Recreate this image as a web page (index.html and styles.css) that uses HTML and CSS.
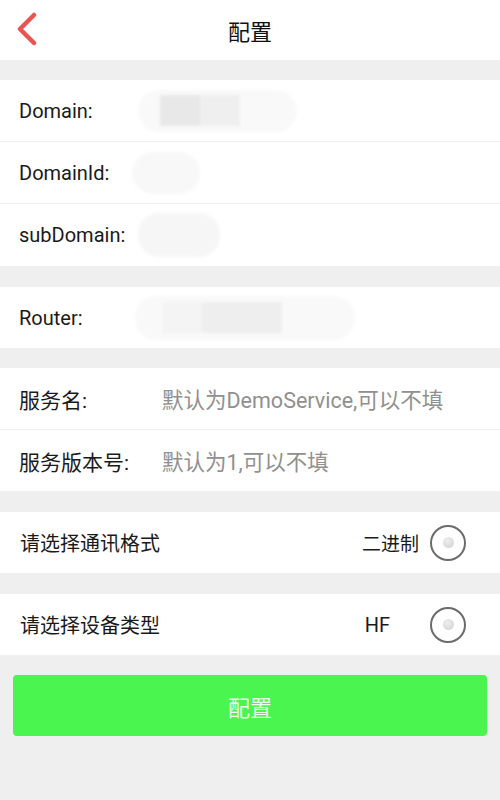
FILE: index.html
```html
<!DOCTYPE html>
<html lang="zh">
<head>
<meta charset="utf-8">
<link rel="stylesheet" href="styles.css">
</head>
<body>
<div class="app">
  <header class="topbar">
    <svg class="back" width="24" height="34" viewBox="0 0 24 34"><path d="M19 3 L5 17 L19 31" fill="none" stroke="#ec5454" stroke-width="4.5" stroke-linecap="round" stroke-linejoin="round"/></svg>
    <h1 class="title">配置</h1>
  </header>

  <section class="group g-domain">
    <div class="row">
      <span class="label">Domain:</span>
      <div class="blob blob-domain"><i class="b1"></i><i class="b2"></i></div>
    </div>
    <div class="row">
      <span class="label">DomainId:</span>
      <div class="blob blob-id"></div>
    </div>
    <div class="row">
      <span class="label">subDomain:</span>
      <div class="blob blob-sub"></div>
    </div>
  </section>

  <section class="group g-wide">
    <div class="row">
      <span class="label">Router:</span>
      <div class="blob blob-router"><i class="b1"></i><i class="b2"></i></div>
    </div>
  </section>

  <section class="group g-service">
    <div class="row">
      <span class="label cjk">服务名:</span>
      <span class="placeholder">默认为DemoService,可以不填</span>
    </div>
    <div class="row">
      <span class="label cjk">服务版本号:</span>
      <span class="placeholder">默认为1,可以不填</span>
    </div>
  </section>

  <section class="group g-wide">
    <div class="row choice">
      <span class="label">请选择通讯格式</span>
      <span class="value">二进制</span>
      <span class="radio"><span class="dot"></span></span>
    </div>
  </section>

  <section class="group g-wide">
    <div class="row choice">
      <span class="label">请选择设备类型</span>
      <span class="value hf">HF</span>
      <span class="radio"><span class="dot"></span></span>
    </div>
  </section>

  <div class="actions">
    <button class="submit">配置</button>
  </div>
</div>
</body>
</html>
```
FILE: styles.css
```css
* { box-sizing: border-box; }
html, body { margin: 0; padding: 0; }
body {
  width: 500px;
  height: 800px;
  background: #efefef;
  font-family: Roboto, "Noto Sans CJK SC", sans-serif;
  color: #1a1a1a;
  overflow: hidden;
}
.app { display: flex; flex-direction: column; }
.topbar {
  height: 60px;
  background: #fff;
  display: flex;
  align-items: center;
  justify-content: center;
  position: relative;
}
.back { position: absolute; left: 15px; top: 12px; }
.title {
  margin: 0;
  font-size: 22px;
  font-weight: normal;
  color: #111;
}
.group {
  margin-top: 20px;
  background: #fff;
  display: flex;
  flex-direction: column;
}
.g-wide { margin-top: 21px; }
.row {
  height: 62px;
  display: flex;
  align-items: center;
  padding-left: 19px;
  border-top: 1px solid #efefef;
}
.row:first-child { border-top: none; }
.g-domain .row:first-child { height: 61px; }
.g-domain .row:last-child { height: 63px; }
.g-wide .row, .g-service .row:first-child { height: 61px; }
.label { font-size: 20px; width: 143px; flex: none; color: #1a1a1a; }
.label.cjk { font-size: 21px; }
.placeholder { font-size: 21.5px; color: #909090; white-space: nowrap; }

.blob {
  height: 42px;
  border-radius: 21px;
  background: #f9f9f9;
  display: flex;
  align-items: center;
  overflow: hidden;
  filter: blur(1.5px);
}
.blob i { display: block; height: 31px; }
.blob-domain { width: 159px; margin-left: -24px; padding-left: 22px; }
.blob-domain .b1 { width: 40px; background: #e8e8e8; }
.blob-domain .b2 { width: 40px; background: #efefef; }
.blob-id { width: 68px; margin-left: -30px; background: #f8f8f8; }
.blob-sub { width: 82px; margin-left: -24px; background: #f6f6f6; height: 44px; }
.blob-router { width: 220px; margin-left: -27px; padding-left: 27px; height: 44px; }
.blob-router .b1 { width: 40px; background: #f4f4f4; }
.blob-router .b2 { width: 80px; background: #eeeeee; }

.choice { padding-left: 20px; padding-right: 34px; }
.choice .label { flex: 1; width: auto; font-size: 20px; }
.value { font-size: 19px; color: #1a1a1a; margin-right: 11px; }
.value.hf { font-size: 20px; margin-right: 40px; }
.radio {
  width: 36px;
  height: 36px;
  border-radius: 50%;
  border: 2px solid #6b6b6b;
  display: flex;
  align-items: center;
  justify-content: center;
}
.dot {
  width: 11px;
  height: 11px;
  border-radius: 50%;
  background: radial-gradient(circle at 40% 35%, #eeeeee, #cfcfcf);
}
.actions { padding: 20px 13px 0; }
.submit {
  width: 100%;
  height: 61px;
  border: none;
  border-radius: 4px;
  background: #4af550;
  color: #eafde9;
  font-size: 22px;
  font-family: Roboto, "Noto Sans CJK SC", sans-serif;
}
```
